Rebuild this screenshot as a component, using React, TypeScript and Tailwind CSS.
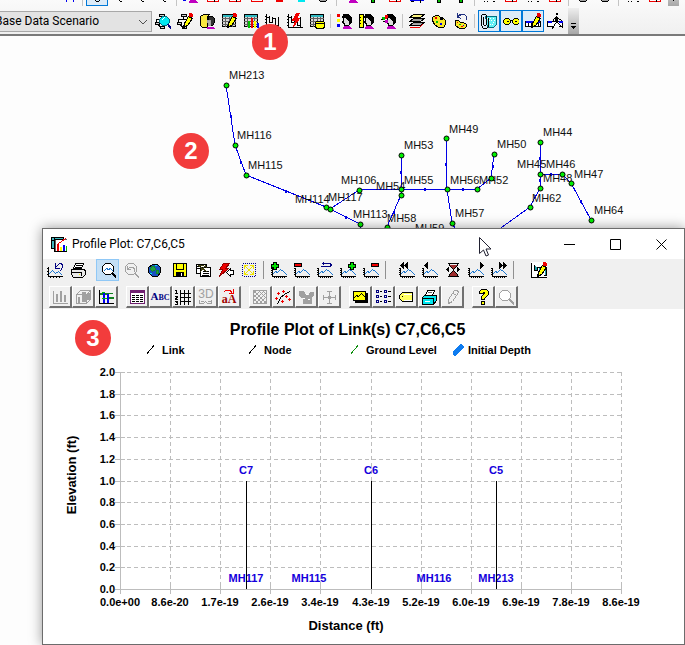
import React from "react";

type Shape = [stroke: string, d: string, fill?: string];

const K = "#000000";
const W = "#ffffff";
const G = "#a0a0a0";
const D = "#606060";
const R = "#f00000";
const Y = "#ffff00";
const C = "#00e8f0";
const B = "#0000f0";
const N = "#000080";
const L = "#1e78d0";
const M = "#c000c0";
const E = "#00c000";

const head: Shape[] = [
  [M, "M7 13h5l2 2h-8z", M],
  [K, "M6 3h5l2 2v4l-2 3h-4v-2l-2-1l1-2z", "#dcdcdc"],
  [K, "M6 1h5l3 3v5l-2 1v-3l-2-1l-1-2h-4z", K],
];
const wave: Shape[] = [
  [K, "M1 6v8h14M3 15h0M5 15h0M7 15h0M9 15h0M11 15h0M13 15h0M0 6h0M0 8h0M0 10h0M0 12h0"],
  [L, "M2 11l2-2l2 1l3-3l3 2l3 3"],
];
const table: Shape[] = [
  [K, "M1 1h13v12h-13z", "#d8d8d8"],
  ["#30b8c0", "M2 2h11M2 3h11"],
  [D, "M1 5h13M1 8h13M1 11h13M4 4v9M8 4v9M11 4v9"],
];
const pencil: Shape[] = [
  [K, "M6 14l1-4l4-7l4 2l-5 7z", Y],
  [Y, "M8 11l4-6M9 11l4-6"],
  [R, "M12 0h2l1 1v2h-3z", R],
];
const net: Shape[] = [
  [K, "M4 1h5v2h-5zM6 4v2M1 6h9M1 6v2M0 9h4v2h-4zM8 9h3v2h-3zM5 13h4v2h-4zM3 12l2 1", "#d0d0d0"],
];
const palette: Shape[] = [
  [K, "M4 2h3l2 2h2l3 3v4l-2 3h-5l-4-3l-2-4v-3z", "#f8e828"],
  [K, "M9 5h2v1h-2z", W],
  [R, "M4 4h1v1h-1z"],
  [E, "M5 8h1v1h-1z"],
  [B, "M9 10h1v1h-1z"],
];
const profiles: Shape[] = [
  [K, "M1 1v13h15M1 4h3v4M4 3v6h3v-5M7 5h3v6M10 5v7h3v-8M13 7v6M0 3h0M0 6h0M0 9h0M0 12h0", "none"],
];

const ICONS = {
  netFind: [...net, ["#007080", "M7 3h4l3 3v3l-3 3h-4l-3-3v-3z", C], [C, "M7 4h4M5 7h8M6 9h6"], [W, "M7 6l2-2"], [N, "M13 11l2 2v2M12 11l3 4"]],
  netEdit: [...net, ...pencil],
  books: [
    [K, "M1 3l3-2h6l-2 2v11h-5l-2-2z", "#f8e840"],
    ["#f8e840", "M2 4v8M4 3v10M6 3v10"],
    [K, "M9 3h4l2 2v4l-2 3h-3z", "#303030"],
    [G, "M8 7h3v5h-2z", "#b0b0b0"],
    [M, "M8 14h6M8 15h7"],
  ],
  tableEdit: [...table, ...pencil],
  tableChart: [...table, [E, "M5 8h1v6h-1z", E], [R, "M8 5h1v9h-1z", R], [Y, "M11 8h1v6h-1z", Y], [B, "M14 10h1v4h-1z", B]],
  profile: profiles,
  profileRun: [...profiles, [R, "M9 0h3l-3 5h3l-6 8l2-6h-3z", R]],
  tableDb: [...table, [K, "M7 8h7l1 1v4l-1 2h-7l-1-2v-4z", Y], [K, "M7 10h7"]],
  headLegend: [...head, [R, "M0 1h2v2h-2z", R], [Y, "M0 6h2v2h-2z", Y], [B, "M0 11h2v2h-2z", B]],
  headRuler: [...head, [K, "M0 1h4v13h-4z", Y], [Y, "M1 2v11M2 2v11"], [K, "M0 4h1M0 7h1M0 10h1"]],
  headColors: [...head, [E, "M1 4h2v2h-2z", E], [R, "M4 2h2v3h-2z", R], [M, "M4 7h2v2h-2z", M], [K, "M0 6h1M2 8h1M6 5h0"]],
  stack: [
    [K, "M4 1h11l-4 3h-11z", "#f8f080"],
    [K, "M4 5h11l-4 3h-11z", "#e0e0e0"],
    [K, "M4 9h11l-4 3h-11z", "#b0b0b0"],
    [R, "M1 14h9l3-3"],
    ["#f8f080", "M4 2h8M3 3h7"],
    [G, "M4 6h8M4 10h8M3 7h7"],
  ],
  palette: palette,
  paletteUndo: [
    ["#203080", "M6 1h5l2 2v3M4 3l4-2M4 3l3 2M4 0v4"],
    [K, "M2 7h3l2 2h3l3 2v2l-2 2h-5l-4-3z", "#f8e828"],
    [R, "M4 9h0M8 13h1"],
    [E, "M6 11h1"],
    [B, "M10 12h0"],
  ],
  clipMap: [
    ["#007080", "M4 3h11v8l-3 3h-6z", "#60f0f4"],
    [W, "M6 5h0M9 5h0M12 5h0M8 7h0M10 7h0M13 7h0M9 11h0M11 11h0M7 9h0M12 9h0"],
    [K, "M0 2l1-1h3l1 1v9l-1 1h-1l-1-1v-7M0 2v10l2 3h3l2-2v-8"],
  ],
  glasses: [
    [K, "M2 5h3l2 2v2l-2 2h-3l-2-2v-2z", Y],
    [K, "M11 5h3l2 2v2l-2 2h-3l-2-2v-2z", Y],
    [K, "M7 7h2M4 8h1M12 8h1"],
  ],
  linkEdit: [
    [K, "M0 8h15v5h-15z", W],
    [B, "M1 8h13M1 9h13"],
    [K, "M3 10v3M6 10v3M13 10v3"],
    ...pencil,
  ],
  runner: [
    [K, "M0 8h15v5h-15z", W],
    [B, "M1 8h4M1 9h3M12 8h3M12 9h3"],
    [W, "M6 11h6M6 12h6M7 13h4"],
    [K, "M9 0h1v1h-1zM9 3v6M8 4h2v4h-2zM7 5l-2 3M11 5l3 2M8 10l-3 5M10 9l3 3l2 2", K],
  ],
  undoPlot: [
    [K, "M1 5v9h14M0 6h0M0 9h0M0 12h0M3 15h0M6 15h0M9 15h0M12 15h0"],
    [L, "M2 11l3-3l3 3l3-2l3 3"],
    [N, "M8 1v5h4M8 5l4-4h2l1 2v2l-2 3"],
  ],
  print: [
    [K, "M5 1h8l-2 5h-8z", W],
    [K, "M6 3h5M5 5h5"],
    [K, "M1 7h13l1 2v3l-3 3h-9l-2-3z", "#e8e8e8"],
    [K, "M2 10h9v3"],
    [Y, "M9 12h0"],
  ],
  zoomPlot: [
    [K, "M5 1h5l3 3v5l-3 3h-5l-3-3v-5z", W],
    [L, "M4 8l2-2l2 1l2-1l2 2"],
    [K, "M12 11l3 3M13 11l2 2M12 12l3 3"],
  ],
  zoomUndo: [
    [G, "M5 1h5l3 3v5l-3 3h-5l-3-3v-5z", "none"],
    [G, "M4 7l2-2h4l1 2v2M4 7h3M4 7v-3M12 11l3 3M12 12l3 3"],
  ],
  globe: [
    [K, "M6 2h5l3 3v5l-3 4h-5l-4-4v-5z", "#1850c0"],
    ["#108830", "M5 4h3l1 3l-3 2l-2-2zM10 8h2v3h-2z", "#20a040"],
    [C, "M9 3h1M4 11h1"],
  ],
  save: [
    [K, "M1 1h13v13h-13z", Y],
    [K, "M4 1h7v6h-7z", Y],
    [K, "M4 10h7v4h-7z", K],
    [W, "M9 11v2"],
  ],
  copy: [
    [K, "M1 2h10v9h-10z", W],
    [K, "M5 5h10v9h-10z", W],
    [K, "M2 4h3M2 6h2M8 9h5M8 11h5M7 13h6"],
    ["#404010", "M3 3h5l3 2M4 4l7 5M10 3l-5 6"],
  ],
  flash: [
    ["#900000", "M5 1h6l-4 5h3l-9 8l3-7h-3z", R],
    [R, "M7 2h2M6 4h1M5 8h2"],
    [K, "M8 10l4-4v2h3v4h-3v2z", W],
  ],
  extents: [
    [N, "M2 1h0M4 1h0M6 1h0M8 1h0M10 1h0M12 1h0M14 1h0M1 3h0M1 5h0M1 7h0M1 9h0M1 11h0M1 13h0M14 3h0M14 5h0M14 7h0M14 9h0M14 11h0M14 13h0M3 14h0M5 14h0M7 14h0M9 14h0M11 14h0M13 14h0"],
    ["#f0e400", "M3 3l9 9M12 3l-9 9M3 6v-3h3M9 3h3v3M3 9v3h3M12 9v3h-3"],
  ],
  waveAdd: [...wave, [K, "M2 0h3v2h2v3h-2v2h-3v-2h-2v-3h2z", K], ["#00e000", "M3 1v5M4 1v5M1 3h5M1 4h5"]],
  waveDel: [...wave, [K, "M0 1h7v3h-7z", R], [R, "M1 2h5v1h-5z"]],
  waveSwap: [...wave, [N, "M5 1h7l2 1v1l-2 1h-8M5 1l1-1M5 1l1 1"]],
  waveAddEnd: [...wave, [K, "M10 0h3v2h2v3h-2v2h-3v-2h-2v-3h2z", K], ["#00e000", "M11 1v5M12 1v5M9 3h5M9 4h5"]],
  waveDelEnd: [...wave, [K, "M8 1h7v3h-7z", R], [R, "M9 2h5v1h-5z"]],
  waveFirst: [...wave, [K, "M1 3l3-3v6zM5 3l3-3v6z", K]],
  wavePrev: [...wave, [K, "M2 3l3-3v6z", K]],
  hourglass: [
    [K, "M3 1h10M3 14h10M4 2v1l4 4l4-4v-1M4 13v-1l4-4l4 4v1", "#a03030"],
    [K, "M1 7l2-2v4zM14 7l-2-2v4z", K],
  ],
  waveNext: [...wave, [K, "M12 0v6l3-3z", K]],
  waveLast: [...wave, [K, "M8 0v6l3-3zM12 0v6l3-3z", K]],
  options: [
    [W, "M0 0h15v15h-15z", W],
    [K, "M0 1v14h15M3 3v5h3v-3h3v6M12 5h3v8h-2"],
    ["#20a0a8", "M4 4v3M5 5v2M8 6v3M14 6v6"],
    ...pencil,
  ],
  bars: [[G, "M1 2v12h14M4 5v7M5 5v7M8 2v10M9 2v10M12 6v6M13 6v6"]],
  bars3d: [[G, "M1 5l4-4h10v9l-4 4h-10zM1 5h10v9M11 5l4-4", "none"], [G, "M3 8h1v5h-1zM7 3h3v9h-3zM12 4h2v6h-2z", G]],
  hbars: [[K, "M1 1v13h14"], ["#108020", "M2 4h12M2 5h6M11 8h4M11 9h4"], [B, "M5 4v9M6 4v9M10 5v8M9 5v8"], [E, "M4 3h2M4 9h4"]],
  grid: [
    ["#702070", "M1 1h14v13h-14z", W],
    ["#702070", "M1 2h14M1 3h14"],
    [K, "M3 6h2M7 6h2M11 6h2M3 8h2M7 8h2M11 8h2M3 10h2M7 10h2M11 10h2M3 12h2M7 12h2M11 12h2"],
  ],
  numGrid: [[K, "M5 1v14M9 1v14M13 1v14M5 4h11M5 8h11M5 12h11M1 1v3M0 1h1M0 4h2M0 7h2v1l-2 1v1h2M0 12h2v3h-2M1 13h1"]],
  hatch: [[G, "M1 1h13v13h-13z", "none"], [G, "M1 4l3-3M1 8l7-7M1 12l11-11M3 14l11-11M7 14l7-7M11 14l3-3M2 2l12 12M1 5l9 9M6 1l8 8M1 9l5 5M10 1l4 4"]],
  scatter: [[K, "M2 14l2-3l1-3l4-3l5-3"], [R, "M3 3v2M2 4h2M8 1v2M7 2h2M1 8v2M0 9h2M7 11v2M6 12h2M11 6v2M10 7h2M14 9v2M13 10h2"]],
  mask: [[G, "M1 2h4l2 4h3l2-3h3v3l-2 2v6h-8v-5l-4-3z", G], [W, "M8 5h1M5 9h1M10 10h1"]],
  cross: [[G, "M8 2v12M2 8h12M6 8h4M6 2h4M6 14h4M2 6v4M14 6v4M7 7h2M7 9h2", "none"]],
  yellowPlot: [[K, "M3 4h12v9h-12z", K], [K, "M1 2h12v9h-12z", Y], [K, "M2 8l2-2l2 1l3-3l3 3"]],
  list: [[N, "M1 1h2v2h-2zM1 6h2v2h-2zM1 11h2v2h-2zM9 1h2v2h-2zM9 6h2v2h-2zM9 11h2v2h-2z", "none"], [K, "M5 2h1M13 2h2M5 7h1M13 7h2M5 12h1M13 12h2"]],
  tag: [[K, "M4 3h10v9h-10l-3-3v-3z", "#ffff60"], [K, "M4 7h0"], [W, "M6 5h7M6 11h7"]],
  printCyan: [[K, "M6 1h7l-2 5h-7z", W], [D, "M7 3h3"], [K, "M1 8l2-2h12v5l-3 4h-11z", C], [K, "M2 9h10v5", "none"], [W, "M4 12h4"]],
  penGray: [[G, "M10 1h3l1 2l-6 9l-4 2v-4zM9 4l3 2", "none"]],
  help: [[K, "M4 2l2-2h5l2 2v3l-4 4v1h-3v-3l3-3v-1h-1v1h-4zM6 12h3v3h-3z", Y], [Y, "M6 2l1-1h3l1 1v2l-3 3v2M7 13h1v1h-1"]],
  lensGray: [[G, "M4 1h5l3 3v4l-3 3h-5l-3-3v-4z", W], [G, "M11 10l4 4M11 11l4 4M12 10l3 3"]],
  app: [
    [K, "M0 1h12v11h-12z", "#40b8c0"],
    [K, "M0 4h12M3 1v11"],
    [D, "M4 3h12v12h-12z", W],
    [K, "M4 3h8M3 3v12h13"],
    [R, "M6 8h1v6h-1z", R],
    [Y, "M9 11h1v3h-1z", Y],
    [B, "M12 9h1v5h-1z", B],
    [R, "M7 7l3-2l4-3"],
    [E, "M15 10v4"],
  ],
  boxRed: [[R, "M2 1h11v13h-11z", W], [K, "M9 11v3M8 12h3"]],
  boxRedOpen: [[R, "M2 1h11v13h-11z", "none"]],
  boxRedSolid: [[R, "M5 9h6v5h-6z", R]],
  boxCyan: [[C, "M5 9h6v5h-6z", C]],
  plusGreen: [[B, "M0 12h14"], [K, "M6 9h3v6h-3z", E]],
  blueTrack: [[B, "M1 13h13"], [K, "M2 14h2M11 12v3"]],
  discGray: [[K, "M5 5h5l3 3v3l-3 3h-5l-3-3v-3z", G]],
  blueH: [[B, "M5 4v10M12 4v10"]],
  dotted: [[K, "M1 12h12M3 14h0M6 14h0M12 14h1"]],
  ring: [[K, "M6 6h4v7l-1 1h-2l-1-1z", "#cce4f7"]],
  stub: [[K, "M8 13h0M9 14h1M8 12h2"]],
} satisfies Record<string, Shape[]>;

type IconName = keyof typeof ICONS;

function Icon({ name }: { name: IconName }) {
  return (
    <svg width="16" height="16" viewBox="0 0 16 16" shapeRendering="crispEdges" aria-hidden="true" className="shrink-0">
      <g transform="translate(.5 .5)" strokeLinecap="square">
        {(ICONS[name] as Shape[]).map(([stroke, d, fill], i) => (
          <path key={i} d={d} stroke={stroke} fill={fill ?? "none"} />
        ))}
      </g>
    </svg>
  );
}

function BarButton({ name, active = false }: { name: IconName; active?: boolean }) {
  return (
    <button
      type="button"
      aria-label={name}
      className={`flex h-[22px] w-[22px] shrink-0 items-center justify-center ${active ? "border border-[#0078d7] bg-[#dcebf8]" : ""}`}
    >
      <Icon name={name} />
    </button>
  );
}

function BarSeparator() {
  return <span className="mx-[2px] h-[14px] w-[2px] shrink-0 self-center border-l border-[#c4c4c4]" />;
}

function BarEnd() {
  return (
    <button
      type="button"
      aria-label="More tools"
      className="ml-[2px] flex h-[26px] w-[11px] shrink-0 items-end justify-center bg-linear-to-b from-[#eeeeee] to-[#a8a8a8] pb-1"
    >
      <svg width="7" height="7" viewBox="0 0 7 7" shapeRendering="crispEdges" aria-hidden="true">
        <path d="M1 0h5v1h-5zM1 3h5l-2.500 3z" fill="#000" />
      </svg>
    </button>
  );
}

function renderBar(items: (IconName | "|")[], active: IconName[] = []) {
  return items.map((item, i) =>
    item === "|" ? <BarSeparator key={i} /> : <BarButton key={i} name={item} active={active.includes(item)} />
  );
}

function MainToolbars() {
  return (
    <header className="border-b-2 border-[#7a7a7a] bg-linear-to-b from-[#fafafa] to-[#f0f0f0]">
      <div className="flex h-[6px] items-end overflow-hidden pl-[58px]">
        {renderBar(
          ["blueH", "|", "ring", "stub", "stub", "stub", "|", "headLegend", "boxRed", "boxRed", "boxRedOpen", "boxRedSolid", "boxCyan", "discGray", "|", "headColors", "plusGreen", "boxRed", "blueTrack", "plusGreen", "plusGreen", "|", "dotted", "boxRed", "dotted", "boxRed", "|", "discGray", "discGray", "|", "dotted", "boxRed"],
          ["ring"]
        )}
        <BarEnd />
      </div>
      <div className="flex h-[28px] items-center pt-[2px]">
        <div className="relative -ml-2 w-[160px] shrink-0">
          <select
            aria-label="Scenario"
            className="block h-[21px] w-full appearance-none border border-[#a8a8a8] bg-[#e3e3e3] pl-[2px] font-['Roboto',sans-serif] text-[12px] leading-[18px] text-black"
          >
            <option>Base Data Scenario</option>
          </select>
          <svg width="10" height="6" viewBox="0 0 10 6" className="pointer-events-none absolute top-2 right-1" aria-hidden="true">
            <path d="M1 1l4 4l4-4" fill="none" stroke="#505050" />
          </svg>
        </div>
        {renderBar(
          ["netFind", "netEdit", "books", "tableEdit", "tableChart", "profile", "profileRun", "tableDb", "|", "headLegend", "headRuler", "headColors", "|", "stack", "palette", "paletteUndo", "|", "clipMap", "glasses", "linkEdit", "runner"],
          ["clipMap", "glasses", "linkEdit"]
        )}
        <BarEnd />
      </div>
    </header>
  );
}

const PIPES = [
  "226,49 235,109 246,139 326,171 330,173 360,188 360,194",
  "330,173 359,154 401,153 447,153 477,153 491,142 494,118",
  "401,119 401,153 401,159 387,191",
  "446,102 447,153 452,187 456,194",
  "540,106 540,138 562,138 571,147 591,184",
  "540,138 540,152 530,171 498,194",
];
const FLOW_MARKS = [
  [231, 80], [241, 126], [286, 155], [346, 181], [401, 136], [425, 153], [463, 153], [446, 128],
  [493, 130], [540, 122], [551, 138], [581, 165], [394, 176], [540, 144],
];
const MANHOLES = [
  [226, 49], [235, 109], [246, 139], [326, 171], [330, 173], [360, 188], [359, 154], [401, 153], [401, 159],
  [387, 191], [401, 119], [446, 102], [447, 153], [477, 153], [491, 142], [494, 118], [452, 187],
  [540, 106], [540, 138], [562, 138], [571, 147], [540, 152], [530, 171], [591, 184],
];
const MANHOLE_NAMES: [string, number, number][] = [
  ["MH213", 229, 43], ["MH116", 237, 103], ["MH115", 248, 133], ["MH114", 295, 167], ["MH117", 328, 165],
  ["MH106", 341, 148], ["MH54", 376, 154], ["MH113", 353, 182], ["MH58", 387, 186], ["MH59", 415, 196],
  ["MH53", 404, 113], ["MH55", 404, 148], ["MH49", 449, 97], ["MH56", 450, 148], ["MH52", 479, 148],
  ["MH50", 497, 112], ["MH57", 455, 181], ["MH44", 543, 100], ["MH45", 517, 132], ["MH46", 546, 132],
  ["MH48", 543, 146], ["MH47", 574, 142], ["MH62", 532, 166], ["MH64", 594, 178],
];

function NetworkMap() {
  return (
    <svg width="685" height="220" viewBox="0 0 685 220" className="absolute top-0 left-0" role="img" aria-label="Sewer network">
      {PIPES.map((points) => (
        <polyline key={points} points={points} fill="none" stroke="#0000e6" shapeRendering="crispEdges" />
      ))}
      {FLOW_MARKS.map(([x, y], i) => (
        <rect key={i} x={x - 1} y={y - 1} width="2" height="3" fill="#0000e6" />
      ))}
      <g className="font-['Liberation_Sans',Arial,sans-serif] text-[11px]" fill="#101010">
        {MANHOLE_NAMES.map(([name, x, y]) => (
          <text key={name} x={x} y={y}>{name}</text>
        ))}
      </g>
      {MANHOLES.map(([x, y], i) => (
        <circle key={i} cx={x + 0.5} cy={y + 0.5} r="2.500" fill="#00f000" stroke="#000" />
      ))}
    </svg>
  );
}

function PlotBarButton({ name, active = false }: { name: IconName; active?: boolean }) {
  return (
    <button
      type="button"
      aria-label={name}
      className={`flex h-[22px] w-[23px] shrink-0 items-center justify-center ${active ? "border border-[#90c8f6] bg-[#c4dff5]" : ""}`}
    >
      <Icon name={name} />
    </button>
  );
}

function RaisedButton({ label, children }: { label: string; children: React.ReactNode }) {
  return (
    <button
      type="button"
      aria-label={label}
      className="flex h-[22px] w-[23px] shrink-0 items-center justify-center overflow-hidden border-t border-r-2 border-b-2 border-l border-t-white border-r-[#707070] border-b-[#707070] border-l-white bg-[#f0f0f0]"
    >
      {children}
    </button>
  );
}

function PlotSeparator() {
  return <span className="mx-[3px] h-[18px] w-px shrink-0 self-center bg-[#909090]" />;
}

const plotGroup = (names: IconName[], active?: IconName) => (
  <div className="flex">
    {names.map((name) => (
      <PlotBarButton key={name} name={name} active={name === active} />
    ))}
  </div>
);

const raisedGroup = (names: IconName[]) =>
  names.map((name) => (
    <RaisedButton key={name} label={name}>
      <Icon name={name} />
    </RaisedButton>
  ));

function PlotToolbars() {
  return (
    <div className="bg-[#f0f0f0] pb-px">
      <div className="flex h-[22px]">
        {plotGroup(["undoPlot", "print"])}
        <span className="w-[7px] shrink-0" />
        {plotGroup(["zoomPlot", "zoomUndo", "globe"], "zoomPlot")}
        <span className="w-[3px] shrink-0" />
        {plotGroup(["save", "copy", "flash", "extents"])}
        <PlotSeparator />
        {plotGroup(["waveAdd", "waveDel", "waveSwap", "waveAddEnd", "waveDelEnd"])}
        <PlotSeparator />
        <span className="w-[6px] shrink-0" />
        {plotGroup(["waveFirst", "wavePrev", "hourglass", "waveNext", "waveLast"])}
        <PlotSeparator />
        <span className="w-[10px] shrink-0" />
        {plotGroup(["options"])}
      </div>
      <div className="mt-[5px] flex gap-2 pl-[6px]">
        <div className="flex">{raisedGroup(["bars", "bars3d", "hbars"])}</div>
        <div className="flex">
          {raisedGroup(["grid"])}
          <RaisedButton label="Titles">
            <span className="font-['Liberation_Serif',serif] text-[11px] leading-none font-bold text-[#000080]">
              A<span className="text-[8px]">BC</span>
            </span>
          </RaisedButton>
          {raisedGroup(["numGrid"])}
          <RaisedButton label="3D view">
            <span className="flex flex-col items-center font-['Liberation_Sans',Arial,sans-serif] text-[12px] leading-[10px] text-[#a0a0a0]">
              3D
              <svg width="16" height="6" viewBox="0 0 16 6" shapeRendering="crispEdges" aria-hidden="true">
                <path d="M1.500 1v3.500h4l2-2l2 2h4v-3.500M3 2.500h3M10 2.500h3" stroke="#a0a0a0" fill="none" />
              </svg>
            </span>
          </RaisedButton>
          <RaisedButton label="Fonts">
            <span className="flex flex-col items-center font-['Liberation_Serif',serif] text-[12px] leading-[11px] text-[#a00000]">
              <svg width="12" height="5" viewBox="0 0 12 5" shapeRendering="crispEdges" aria-hidden="true">
                <path d="M1 3l2-2h4l2 3M10 0v4h-4" stroke="#f00000" fill="none" />
              </svg>
              <b>aA</b>
            </span>
          </RaisedButton>
        </div>
        <div className="flex">{raisedGroup(["hatch", "scatter", "mask", "cross"])}</div>
        <div className="flex">{raisedGroup(["yellowPlot", "list", "tag", "printCyan", "penGray"])}</div>
        <div className="flex">{raisedGroup(["help", "lensGray"])}</div>
      </div>
    </div>
  );
}

const LEGEND = [
  { label: "Link", color: "#000000", wide: false },
  { label: "Node", color: "#000000", wide: false },
  { label: "Ground Level", color: "#109010", wide: false },
  { label: "Initial Depth", color: "#0f7cf0", wide: true },
];

const X_TICKS = ["0.0e+00", "8.6e-20", "1.7e-19", "2.6e-19", "3.4e-19", "4.3e-19", "5.2e-19", "6.0e-19", "6.9e-19", "7.8e-19", "8.6e-19"];
const Y_TICKS = ["2.0", "1.8", "1.6", "1.4", "1.2", "1.0", "0.8", "0.6", "0.4", "0.2", "0.0"];
const LEFT = 77;
const TOP = 12;
const tickX = (i: number) => LEFT + Math.round(50.1 * i);
const tickY = (i: number) => TOP + Math.round(21.7 * i);
const LINKS: [string, number][] = [["C7", 203], ["C6", 328], ["C5", 453]];
const NODES: [string, number][] = [["MH117", 203], ["MH115", 266], ["MH116", 391], ["MH213", 453]];

function ProfileChart() {
  return (
    <svg viewBox="0 0 641 284" className="block w-full font-['Liberation_Sans',Arial,sans-serif] text-[11px] font-bold" role="img" aria-label="Profile plot">
      <g stroke="#bdbdbd" shapeRendering="crispEdges">
        {Y_TICKS.slice(0, -1).map((tick, i) => (
          <g key={tick}>
            <path d={`M${LEFT} ${tickY(i) + 0.5}H${tickX(10)}`} strokeDasharray="4 3" />
            <path d={`M${LEFT - 5} ${tickY(i) + 0.5}h10`} />
          </g>
        ))}
        {X_TICKS.map((tick, i) => (
          <g key={tick}>
            <path d={`M${tickX(i) + 0.5} ${TOP}V${tickY(10)}`} strokeDasharray={i ? "4 3" : undefined} />
            <path d={`M${tickX(i) + 0.5} ${tickY(10) - 4}v9`} />
          </g>
        ))}
        <path d={`M${LEFT - 5} ${tickY(10) + 0.5}H${tickX(10)}`} />
      </g>
      <g fill="#000">
        {Y_TICKS.map((tick, i) => (
          <text key={tick} x="72" y={tickY(i) + 4} textAnchor="end">{tick}</text>
        ))}
        {X_TICKS.map((tick, i) => (
          <text key={tick} x={tickX(i)} y="246" textAnchor="middle">{tick}</text>
        ))}
      </g>
      <g fill="#1400dc" textAnchor="middle">
        {LINKS.map(([name, x]) => (
          <text key={name} x={x} y="114">{name}</text>
        ))}
        {NODES.map(([name, x]) => (
          <text key={name} x={x} y="222">{name}</text>
        ))}
      </g>
      {LINKS.map(([name, x]) => (
        <path key={name} d={`M${x + 0.5} 121V229`} stroke="#000" shapeRendering="crispEdges" />
      ))}
      <g fill="#000" className="text-[13px]" textAnchor="middle">
        <text x="303" y="270">Distance (ft)</text>
        <text x="-115" y="33" transform="rotate(-90)">Elevation (ft)</text>
      </g>
    </svg>
  );
}

function PlotWindow() {
  return (
    <section className="relative mt-[192px] ml-[42px] border border-[#6c6c6c] bg-white shadow-[0_0_12px_rgba(0,0,0,0.4)]">
      <div className="flex h-[30px] items-center pl-2">
        <Icon name="app" />
        <h1 className="ml-[5px] flex-1 font-['Roboto',sans-serif] text-[12px] leading-4 text-black">Profile Plot: C7,C6,C5</h1>
        {[
          ["Minimize", "M0 5.500h11"],
          ["Maximize", "M.5 .5h10v10h-10z"],
          ["Close", "M.5 .5l10 10M10.500 .5l-10 10"],
        ].map(([label, d]) => (
          <button key={label} type="button" aria-label={label} className="flex h-[30px] w-[46px] items-center justify-center">
            <svg width="11" height="11" viewBox="0 0 11 11" aria-hidden="true">
              <path d={d} fill="none" stroke="#000" />
            </svg>
          </button>
        ))}
      </div>
      <PlotToolbars />
      <div className="pt-[11px]">
        <div className="pr-[32px] text-center font-['Liberation_Sans',Arial,sans-serif] font-bold text-black">
          <h2 className="text-[16px] leading-5">Profile Plot of Link(s) C7,C6,C5</h2>
          <ul className="ml-[104px] grid grid-cols-[repeat(4,102px)] text-left text-[11px] leading-5">
            {LEGEND.map(({ label, color, wide }) => (
              <li key={label} className="flex items-center whitespace-nowrap">
                <svg width="15" height="12" viewBox="0 0 15 12" shapeRendering="crispEdges" className="shrink-0" aria-hidden="true">
                  {wide ? (
                    <path d="M2 9L8 3" stroke={color} strokeWidth="5" strokeLinecap="square" />
                  ) : (
                    <path d="M0 9.500L7 1.500" stroke={color} />
                  )}
                </svg>
                {label}
              </li>
            ))}
          </ul>
        </div>
        <ProfileChart />
      </div>
    </section>
  );
}

function Badge({ n, place }: { n: number; place: string }) {
  return (
    <span
      className={`absolute flex size-9 items-center justify-center rounded-full bg-[#f23c3c] font-['Liberation_Sans',Arial,sans-serif] text-[24px] leading-none font-bold text-white ${place}`}
    >
      {n}
    </span>
  );
}

export default function App() {
  return (
    <div className="relative min-h-screen overflow-hidden bg-[#fdfdfd]">
      <MainToolbars />
      <main className="relative flow-root">
        <NetworkMap />
        <PlotWindow />
      </main>
      <Badge n={1} place="top-6 left-[252px]" />
      <Badge n={2} place="top-[133px] left-[173px]" />
      <Badge n={3} place="top-[320px] left-[75px]" />
      <svg width="13" height="20" viewBox="0 0 13 20" className="pointer-events-none absolute top-[237px] left-[479px]" aria-hidden="true">
        <path d="M.5 .5v16l4-3.500l2.500 6l2.500-1l-2.500-6h5z" fill="#fff" stroke="#202030" />
      </svg>
    </div>
  );
}
